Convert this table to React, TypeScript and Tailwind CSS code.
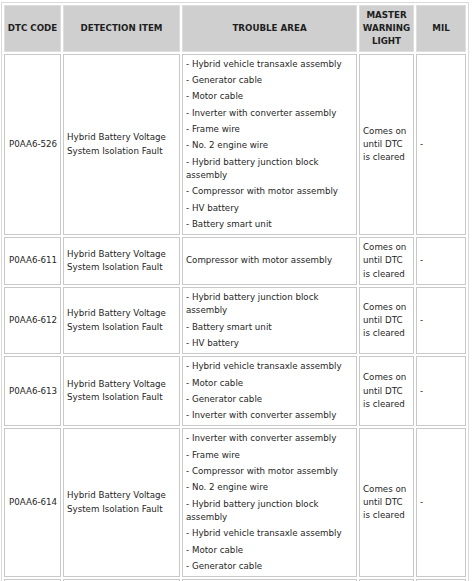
import React from "react";

type Row = {
  code: string;
  item: string;
  areas: string[];
  dash: boolean;
};

const rows: Row[] = [
  {
    code: "P0AA6-526",
    item: "Hybrid Battery Voltage System Isolation Fault",
    dash: true,
    areas: [
      "Hybrid vehicle transaxle assembly",
      "Generator cable",
      "Motor cable",
      "Inverter with converter assembly",
      "Frame wire",
      "No. 2 engine wire",
      "Hybrid battery junction block assembly",
      "Compressor with motor assembly",
      "HV battery",
      "Battery smart unit",
    ],
  },
  {
    code: "P0AA6-611",
    item: "Hybrid Battery Voltage System Isolation Fault",
    dash: false,
    areas: ["Compressor with motor assembly"],
  },
  {
    code: "P0AA6-612",
    item: "Hybrid Battery Voltage System Isolation Fault",
    dash: true,
    areas: ["Hybrid battery junction block assembly", "Battery smart unit", "HV battery"],
  },
  {
    code: "P0AA6-613",
    item: "Hybrid Battery Voltage System Isolation Fault",
    dash: true,
    areas: [
      "Hybrid vehicle transaxle assembly",
      "Motor cable",
      "Generator cable",
      "Inverter with converter assembly",
    ],
  },
  {
    code: "P0AA6-614",
    item: "Hybrid Battery Voltage System Isolation Fault",
    dash: true,
    areas: [
      "Inverter with converter assembly",
      "Frame wire",
      "Compressor with motor assembly",
      "No. 2 engine wire",
      "Hybrid battery junction block assembly",
      "Hybrid vehicle transaxle assembly",
      "Motor cable",
      "Generator cable",
    ],
  },
];

const th =
  "bg-[#cfcfcf] border border-[#dedede] px-[1px] py-[2.5px] text-center align-middle font-bold text-[#1e1e1e]";
const td = "border border-[#c9c9c9] px-[3px] py-[3px] align-middle text-[#262626]";

export default function App() {
  return (
    <div
      className="bg-white min-h-[581px] pt-[2px] pl-[1px]"
      style={{ fontFamily: '"DejaVu Sans", Verdana, sans-serif' }}
    >
      <table className="table-fixed border-separate border-spacing-[2px] border border-[#dadada] w-[468px] text-[8.7px] leading-[13.3px]">
        <colgroup>
          <col className="w-[57px]" />
          <col className="w-[117px]" />
          <col className="w-[175px]" />
          <col className="w-[55px]" />
          <col className="w-[50px]" />
        </colgroup>
        <thead>
          <tr>
            <th className={th}>DTC CODE</th>
            <th className={th}>DETECTION ITEM</th>
            <th className={th}>TROUBLE AREA</th>
            <th className={th}>
              MASTER
              <br />
              WARNING
              <br />
              LIGHT
            </th>
            <th className={th}>MIL</th>
          </tr>
        </thead>
        <tbody>
          {rows.map((r) => (
            <tr key={r.code}>
              <td className={`${td} whitespace-nowrap pl-[4px] pr-[1px]`}>{r.code}</td>
              <td className={td}>{r.item}</td>
              <td className={td}>
                <div className="flex flex-col gap-[3px]">
                  {r.areas.map((a) => (
                    <div key={a}>{r.dash ? `- ${a}` : a}</div>
                  ))}
                </div>
              </td>
              <td className={td}>Comes on until DTC is cleared</td>
              <td className={td}>-</td>
            </tr>
          ))}
          <tr>
            <td className={`${td} h-[40px]`}></td>
            <td className={td}></td>
            <td className={td}></td>
            <td className={td}></td>
            <td className={td}></td>
          </tr>
        </tbody>
      </table>
    </div>
  );
}
